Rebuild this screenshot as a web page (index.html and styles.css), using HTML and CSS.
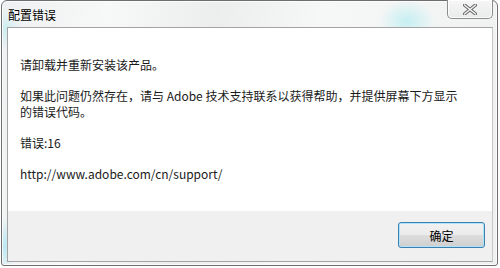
FILE: index.html
```html
<!DOCTYPE html>
<html lang="zh-CN">
<head>
<meta charset="utf-8">
<title>配置错误</title>
<link rel="stylesheet" href="styles.css">
</head>
<body>
<div class="window">
  <div class="titlebar">
    <span class="title">配置错误</span>
    <button class="close" aria-label="关闭">
      <svg width="14" height="11" viewBox="0 0 14 11">
        <path d="M1.5 1 L12.5 10 M12.5 1 L1.5 10" stroke="#6b6b6b" stroke-width="3.4" stroke-linecap="round"/>
        <path d="M1.5 1 L12.5 10 M12.5 1 L1.5 10" stroke="#f4f4f4" stroke-width="1.4" stroke-linecap="round"/>
      </svg>
    </button>
  </div>
  <div class="client">
    <div class="content">
      <p>请卸载并重新安装该产品。</p>
      <p>如果此问题仍然存在，请与 Adobe 技术支持联系以获得帮助，并提供屏幕下方显示<br>的错误代码。</p>
      <p>错误:16</p>
      <p>http://www.adobe.com/cn/support/</p>
    </div>
    <div class="footer">
      <button class="ok">确定</button>
    </div>
  </div>
</div>
</body>
</html>
```
FILE: styles.css
```css
html, body {
  margin: 0;
  padding: 0;
  background: #ffffff;
}
body {
  width: 500px;
  height: 268px;
  font-family: "Noto Sans CJK SC", "Noto Sans", sans-serif;
  font-size: 12px;
  color: #1a1a1a;
}
.window {
  box-sizing: border-box;
  margin-left: 1px;
  width: 497px;
  height: 266px;
  border: 1px solid #6e6e6e;
  border-radius: 6px 6px 3px 3px;
  background:
    radial-gradient(ellipse 40px 30px at 405px 20px, rgba(160, 235, 240, 0.55), rgba(160,235,240,0) 70%),
    radial-gradient(ellipse 14px 40px at 3px 245px, rgba(150, 225, 240, 0.6), rgba(150,225,240,0) 70%),
    radial-gradient(ellipse 20px 30px at 4px 28px, rgba(170, 235, 240, 0.5), rgba(170,235,240,0) 70%),
    linear-gradient(100deg, #eef0f1 0%, #f7f8f8 20%, #eceeee 40%, #f6f7f7 60%, #eff1f1 100%);
  display: flex;
  flex-direction: column;
  padding: 0 4px 3px 5px;
  box-shadow: inset 0 0 0 1px rgba(255,255,255,0.7);
}
.titlebar {
  height: 26px;
  display: flex;
  align-items: flex-start;
  justify-content: space-between;
  flex-shrink: 0;
}
.title {
  margin-top: 6px;
  margin-left: 1px;
  line-height: 16px;
  color: #000;
  text-shadow: 0 0 6px rgba(255,255,255,0.9);
}
.close {
  margin: -1px 0 0 0;
  width: 46px;
  height: 19px;
  padding: 0;
  border: 1px solid #8d8d8d;
  border-top: none;
  border-radius: 0 0 5px 5px;
  background: linear-gradient(#f6f6f6, #e9eaeb);
  box-shadow: inset 0 0 0 1px rgba(255,255,255,0.8);
  display: flex;
  align-items: center;
  justify-content: center;
}
.client {
  flex: 1;
  border: 1px solid #a3a3a3;
  border-right-color: #c6c6c6;
  background: #ffffff;
  display: flex;
  flex-direction: column;
}
.content {
  flex: 1;
  padding: 29px 20px 0 12px;
  white-space: nowrap;
}
.content p {
  margin: 0 0 15px 0;
  line-height: 16px;
}
.footer {
  height: 50px;
  background: #f0f0f0;
  display: flex;
  justify-content: flex-end;
  align-items: flex-start;
  padding: 11px 7px 0 0;
  box-sizing: border-box;
}
.ok {
  width: 87px;
  height: 26px;
  padding: 0;
  border: 1px solid #3c7fb1;
  border-radius: 3px;
  background: linear-gradient(#f2f2f2 0%, #ebebeb 48%, #dddddd 52%, #cfcfcf 100%);
  box-shadow: inset 0 0 0 1px #aee3fa;
  font-family: "Noto Sans CJK SC", "Noto Sans", sans-serif;
  font-size: 12px;
  color: #000;
}
```
